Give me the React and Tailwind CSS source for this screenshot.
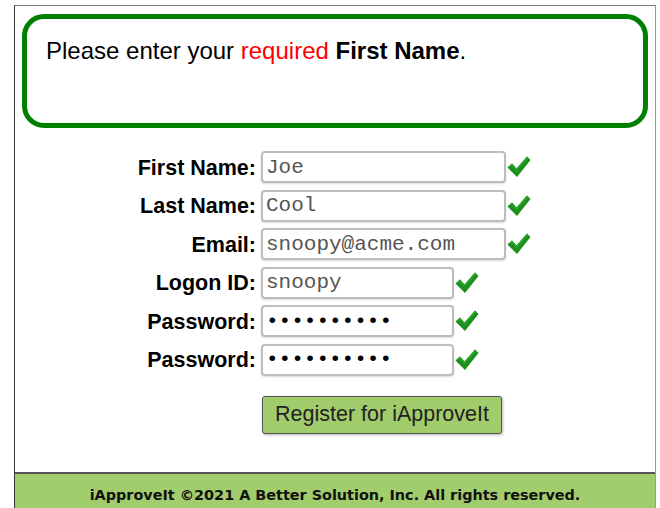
import React from 'react';

const Check = () => (
  <svg width="24" height="22" viewBox="0 0 24 22" className="shrink-0">
    <path d="M0.5 11.5 L5 7.5 L9.5 12.5 L20 0.5 L23.5 4 L10 21 Z" fill="#1d8f1d" />
    <path d="M0.5 11.5 L5 7.5 L9.5 12.5 L20 0.5 L21.5 2 L9.5 15 L5 10 Z" fill="#2aa52a" />
  </svg>
);

const fields = [
  { label: 'First Name:', value: 'Joe', type: 'text', wide: true },
  { label: 'Last Name:', value: 'Cool', type: 'text', wide: true },
  { label: 'Email:', value: 'snoopy@acme.com', type: 'text', wide: true },
  { label: 'Logon ID:', value: 'snoopy', type: 'text', wide: false },
  { label: 'Password:', value: 'abcdefghij', type: 'password', wide: false },
  { label: 'Password:', value: 'abcdefghij', type: 'password', wide: false },
];

export default function App() {
  return (
    <div className="h-[508px] overflow-hidden bg-white pt-[5px] pl-[14px] pr-[4px]" style={{ fontFamily: '"Liberation Sans", Arial, sans-serif' }}>
      <div className="flex h-[540px] flex-col border-t border-l border-r border-t-[#777] border-l-[#333] border-r-[#999]">
        <div className="mx-[7px] mt-[8px] h-[114px] rounded-[22px] border-[5px] border-[#008000] px-[19px] pt-[18px]">
          <p className="text-[24px] leading-[28px] text-black">
            Please enter your <span className="text-[#ff0000]">required</span> <b>First Name</b>.
          </p>
        </div>

        <div className="mt-[23px] grid grid-cols-[241px_1fr] gap-x-[5px] gap-y-[6.5px]">
          {fields.map((f, i) => (
            <React.Fragment key={i}>
              <label className="mt-[3px] self-center text-right text-[21.5px] font-bold leading-none text-black">{f.label}</label>
              <div className="flex items-center gap-[1px]">
                <input
                  type={f.type}
                  defaultValue={f.value}
                  readOnly
                  className={`h-[32px] ${f.wide ? 'w-[245px]' : 'w-[193px]'} rounded-[4px] border-2 border-[#bdbdbd] bg-white px-[3px] text-[21px] ${f.type === 'password' ? 'text-black' : 'text-[#555]'} shadow-[0_1px_2px_rgba(0,0,0,0.15)] outline-none`}
                  style={{ fontFamily: '"Liberation Mono", "Courier New", monospace' }}
                />
                <Check />
              </div>
            </React.Fragment>
          ))}
        </div>

        <div className="mt-[20px] pl-[247px]">
          <button className="h-[38px] w-[240px] rounded-[3px] border border-[#555] bg-[#a1cc6b] text-[21.5px] text-[#222] shadow-[1px_1px_3px_rgba(0,0,0,0.3)]">
            Register for iApproveIt
          </button>
        </div>

        <footer className="mt-[38px] flex-1 border-t-2 border-[#555] bg-[#a2cd6d] pt-[9px] text-center">
          <span className="text-[14.4px] font-bold text-[#111]" style={{ fontFamily: '"DejaVu Sans", Verdana, sans-serif' }}>
            iApproveIt ©2021 A Better Solution, Inc. All rights reserved.
          </span>
        </footer>
      </div>
    </div>
  );
}
